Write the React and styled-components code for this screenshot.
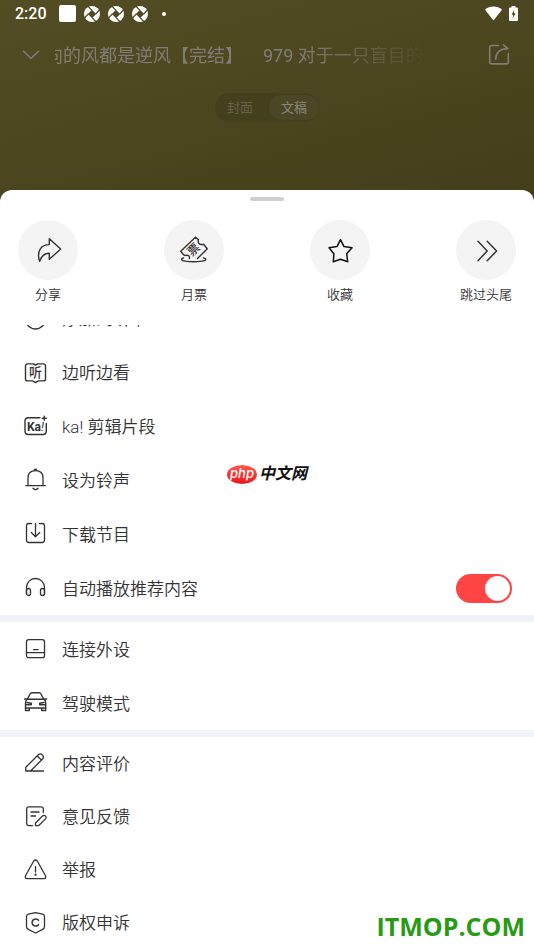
import React, { useState } from "react";
import styled, { createGlobalStyle } from "styled-components";

const GlobalStyle = createGlobalStyle`
  * {
    box-sizing: border-box;
  }
  body {
    margin: 0;
    font-family: Roboto, "Noto Sans CJK SC", sans-serif;
    color: #333333;
  }
  button {
    padding: 0;
    border: 0;
    background: none;
    font: inherit;
    color: inherit;
    cursor: pointer;
  }
`;

const Page = styled.div`
  position: relative;
  display: flex;
  flex-direction: column;
  height: 100vh;
  overflow: hidden;
  background: #433e1a linear-gradient(165deg, #524d23 0%, #4b461f 50%, #433e1a 100%)
    0 0 / 100% 210px no-repeat;
`;

const StatusBar = styled.div`
  display: flex;
  align-items: center;
  justify-content: space-between;
  height: 27px;
  padding: 0 16px 0 15px;
  color: #ffffff;
`;

const StatusGroup = styled.div`
  display: flex;
  align-items: center;
  gap: ${({ $gap }) => $gap}px;
`;

const Clock = styled.span`
  margin-right: 4px;
  font-size: 16px;
  font-weight: 500;
  line-height: 27px;
`;

const AppSquare = styled.span`
  width: 17px;
  height: 17px;
  border-radius: 2px;
  background: #ffffff;
`;

const Dot = styled.span`
  width: 4px;
  height: 4px;
  margin-left: 6px;
  border-radius: 50%;
  background: #ffffff;
`;

const NavBar = styled.header`
  display: flex;
  align-items: center;
  height: 56px;
  padding: 0 23px 0 22px;
  color: #7f7d76;
`;

const NavButton = styled.button`
  display: flex;
`;

const Marquee = styled.div`
  flex: 1;
  min-width: 0;
  margin: 0 56px 0 15px;
  padding-top: 2px;
  overflow: hidden;
  white-space: nowrap;
  -webkit-mask-image: linear-gradient(90deg, #000 66%, transparent 100%);
  mask-image: linear-gradient(90deg, #000 66%, transparent 100%);
`;

const MarqueeTrack = styled.div`
  display: flex;
  gap: 20px;
  margin-left: -10px;
  font-size: 18px;
  line-height: 26px;
`;

const Tabs = styled.div`
  display: flex;
  align-self: center;
  margin: 10px 0 68px;
  padding: 2px 0;
  border-radius: 15px;
  background: #443f1c;
`;

const Tab = styled.button`
  height: 25px;
  padding: ${({ $active }) => ($active ? "0 12px" : "0 16px 0 12px")};
  border-radius: 13px;
  background: ${({ $active }) => ($active ? "#4b4625" : "transparent")};
  color: ${({ $active }) => ($active ? "#8a8779" : "#66624a")};
  font-size: 13px;
  line-height: 25px;
`;

const Sheet = styled.section`
  display: flex;
  flex: 1;
  flex-direction: column;
  min-height: 0;
  padding-top: 7px;
  border-radius: 12px 12px 0 0;
  background: #ffffff;
`;

const Handle = styled.div`
  align-self: center;
  width: 34px;
  height: 4px;
  border-radius: 2px;
  background: #cfcfcf;
`;

const Actions = styled.div`
  display: flex;
  justify-content: space-between;
  padding: 19px 18px 21px;
`;

const Action = styled.button`
  display: flex;
  flex-direction: column;
  align-items: center;
  gap: 6px;
  width: 60px;
  font-size: 13px;
  font-weight: 350;
  line-height: 18px;
`;

const Circle = styled.span`
  display: flex;
  align-items: center;
  justify-content: center;
  width: 60px;
  height: 60px;
  border-radius: 50%;
  background: #f4f4f4;
`;

const MenuScroll = styled.div`
  flex: 1;
  min-height: 0;
  overflow: hidden;
`;

/* The list is scrolled part of the way past its first row */
const MenuContent = styled.div`
  margin-top: -34px;
`;

const Group = styled.div`
  display: grid;
  grid-auto-rows: ${({ $rowHeight }) => $rowHeight}px;

  & + & {
    border-top: 7px solid #f0f4f8;
  }
`;

const Row = styled.button`
  display: flex;
  align-items: center;
  gap: 14px;
  width: 100%;
  padding: 0 22px 0 24px;
  font-size: 17px;
  font-weight: 350;
  line-height: 24px;
  text-align: left;
`;

const RowLabel = styled.span`
  flex: 1;
  padding-top: 1px;
`;

const Switch = styled.input`
  appearance: none;
  width: 56px;
  height: 29px;
  margin: 0;
  padding: 2px;
  border-radius: 15px;
  background: ${({ checked }) => (checked ? "#ff4444" : "#d8d8d8")};
  cursor: pointer;

  &::before {
    content: "";
    display: block;
    width: 25px;
    height: 25px;
    margin-left: ${({ checked }) => (checked ? "27px" : "0")};
    border-radius: 50%;
    background: #ffffff;
  }
`;

const CenterMark = styled.div`
  position: absolute;
  top: 464px;
  left: 50%;
  display: flex;
  align-items: center;
  gap: 2px;
  transform: translateX(-50%);
  color: #111111;
  font-size: 16px;
  font-style: italic;
  font-weight: 700;
  line-height: 20px;
  white-space: nowrap;
  pointer-events: none;
`;

const PhpBadge = styled.span`
  width: 30px;
  height: 19px;
  border-radius: 50%;
  background: linear-gradient(#ff5a50, #e8161c);
  color: #ffffff;
  font-family: Inter, sans-serif;
  font-size: 13px;
  font-weight: 500;
  line-height: 17px;
  text-align: center;
`;

const SiteMark = styled.div`
  position: absolute;
  right: 9px;
  bottom: 9px;
  color: #2a9a16;
  font-family: "Open Sans", sans-serif;
  font-size: 25px;
  font-weight: 700;
  line-height: 30px;
  pointer-events: none;
`;

const Icon = ({ size = 24, width = 1.3, children }) => (
  <svg
    width={size}
    height={size}
    viewBox={`0 0 ${size} ${size}`}
    fill="none"
    stroke="currentColor"
    strokeWidth={width}
    strokeLinecap="round"
    strokeLinejoin="round"
    aria-hidden="true"
  >
    {children}
  </svg>
);

const Aperture = () => (
  <svg width="16" height="16" viewBox="0 0 17 17" aria-hidden="true">
    <circle cx="8.5" cy="8.5" r="8.5" fill="#fff" />
    <path fill="#4f4a22" d="M8.500 4 13 8.500 8.500 13 4 8.500Z" />
    <g stroke="#4f4a22" strokeWidth="1.3">
      <path d="M8.500 4.600 3.500 -.4" />
      <path d="M12.400 8.500 17.400 3.500" />
      <path d="M8.500 12.400 13.500 17.400" />
      <path d="M4.600 8.500 -.4 13.500" />
    </g>
  </svg>
);

const Wifi = () => (
  <svg width="17" height="15" viewBox="0 0 17 15" aria-hidden="true">
    <path fill="#fff" d="M8.500 14.500 0 3.800C2.400 1.800 5.300.6 8.500.6S14.600 1.800 17 3.800Z" />
  </svg>
);

const Battery = () => (
  <svg width="9" height="15" viewBox="0 0 9 15" aria-hidden="true">
    <path fill="#fff" d="M2.500 0h4v1.400H8q1 0 1 1V14q0 1-1 1H1q-1 0-1-1V2.400q0-1 1-1h1.500Z" />
    <path fill="#4a451e" d="M5.300 3.800 2.500 8.700h1.700l-.6 3.800 3-5.200H4.900Z" />
  </svg>
);

const ChevronDown = () => (
  <svg width="18" height="12" viewBox="0 0 18 12" fill="none" aria-hidden="true">
    <path d="M1 1.700 9 9.500l8-7.800" stroke="currentColor" strokeWidth="1.600" />
  </svg>
);

const ShareBox = () => (
  <Icon size={24} width={1.6}>
    <path d="M11.500 2.500H4.500Q2.700 2.500 2.700 4.300V19.100Q2.700 20.900 4.500 20.900H19.500Q21.300 20.900 21.300 19.100V10.500" />
    <path d="M8.700 16.400C8.700 10.100 12.500 5.600 20.800 5.600M16.500 1.800 21 5.600" />
  </Icon>
);

const actions = [
  {
    label: "分享",
    icon: (
      <Icon size={30} width={1.4}>
        <path d="M16.300 3.700 27.700 14 16.300 24.300V18.300C12 18.300 8.600 20.500 6.700 26.300C5.200 22.500 5.200 17.500 7.300 13.900C9.300 10.700 12.300 9.600 16.300 9.600Z" />
      </Icon>
    ),
  },
  {
    label: "月票",
    icon: (
      <Icon size={30} width={1.4}>
        <path d="M10.300 23.500C11 21 9.500 19.700 6.500 20.400Q5 20.600 4.200 19.300L1.700 16.300 16.500 2.200 19.500 4.600C18.300 7.600 20.500 10.300 24.500 9.300L28.300 13.700 18.500 23.500" />
        <path d="M4.500 22.800C1.500 24 2 25.500 6 26.100Q14.500 27.400 23 26.100C27.500 25.500 28 24 24.500 22.800" />
        <text
          transform="translate(14.500 14.500) rotate(-43)"
          y="4.200"
          fontSize="12"
          fontWeight="500"
          textAnchor="middle"
          fill="currentColor"
          stroke="none"
        >
          票
        </text>
      </Icon>
    ),
  },
  {
    label: "收藏",
    icon: (
      <Icon size={30} width={1.5}>
        <path
          stroke="#111"
          d="M15.500 4.600 19 11.600 27 12.800 21.700 18.700 22.700 26.800 15.500 24.200 8.300 26.800 8.900 18.700 4 12.800 12 11.600Z"
        />
      </Icon>
    ),
  },
  {
    label: "跳过头尾",
    icon: (
      <Icon size={30} width={1.5}>
        <path d="M7 6.300 16.200 16 7 25.700M16.200 6.300 25.600 16 16.200 25.700" />
      </Icon>
    ),
  },
];

const icons = {
  add: (
    <Icon>
      <circle cx="11.500" cy="13" r="10" />
      <path d="M11.500 8.500v9M7 13h9" />
    </Icon>
  ),
  book: (
    <Icon width={1.4}>
      <path d="M11.500 5.200 9.300 3.900H3.500Q1.500 3.900 1.500 5.900V18.900Q1.500 20.900 3.500 20.900H8.700L11.500 22.600 14.300 20.900H19.500Q21.500 20.900 21.500 18.900V5.900Q21.500 3.900 19.500 3.900H13.700Z" />
      <text x="11.500" y="17.300" fontSize="13" fontWeight="500" textAnchor="middle" fill="currentColor" stroke="none">
        听
      </text>
    </Icon>
  ),
  ka: (
    <Icon width={1.4}>
      <path d="M16 3.700H4.500Q1 3.700 1 7V17Q1 20.500 4.500 20.500H19Q22.300 20.500 22.300 17V9.500" />
      <path d="M20.300 2.300v4M18.300 4.300h4" />
      <text x="11.500" y="16.500" fontSize="12" fontWeight="700" textAnchor="middle" fill="currentColor" stroke="none">
        Ka<tspan fontStyle="italic" fontWeight="400">!</tspan>
      </text>
    </Icon>
  ),
  bell: (
    <Icon>
      <path d="M1.800 17.700H21.200M4 17.700V10Q4 2.600 11.500 2.600T19 10V17.700M10.300 1.300H12.700M9 20.300Q11.500 23 14 20.300" />
    </Icon>
  ),
  download: (
    <Icon>
      <path d="M7.500 1.700Q6.800 1.500 4.500 1.500Q2.500 1.500 2.500 4V18Q2.500 20.500 5 20.500H18Q20.500 20.500 20.500 18V4Q20.500 1.500 18.500 1.500Q16.200 1.500 15.500 1.700" />
      <path d="M11.500 1.500V14.500M7.300 10.500 11.500 14.700 15.700 10.500" />
    </Icon>
  ),
  headphones: (
    <Icon>
      <path d="M2.500 18V11.500A9 9 0 0 1 20.500 11.500V18" />
      <rect x="2.500" y="12.500" width="4" height="7" rx="2" />
      <rect x="16.500" y="12.500" width="4" height="7" rx="2" />
    </Icon>
  ),
  device: (
    <Icon>
      <rect x="2.500" y="2.700" width="18" height="18" rx="2.200" />
      <path d="M2.500 15.700H20.500M9.500 12.700H14" />
    </Icon>
  ),
  car: (
    <Icon width={1.4}>
      <path d="M3.300 8.200 6 3Q6.600 1.700 8 1.700H15Q16.400 1.700 17 3L19.700 8.200M.5 8H2.500M20.500 8H22.700M3.300 8.200H19.700Q21.700 9.500 21.700 12V19.500H17.700V17H5.300V19.500H1.500V12Q1.500 9.500 3.300 8.200M1.500 17H5.300M17.700 17H21.700" />
      <path d="M3 11.500 7.300 12.200V13.800H2.500M20 11.500 15.700 12.200V13.800H20.700" />
    </Icon>
  ),
  pencil: (
    <Icon>
      <path d="M1.800 19V15.300L14.300 2.700Q16.200 1 18.300 2.900T18.600 7L6.500 19H1.800M13.200 4 17.500 8M6.500 19H19.500" />
    </Icon>
  ),
  feedback: (
    <Icon>
      <path d="M8.500 20.700H5Q2.700 20.700 2.700 18.500V4Q2.700 1.900 5 1.900H17Q19.300 1.900 19.300 4V7.500M7 7H15M7 11H11.500" />
      <path d="M11.500 20.700V18L18.800 10.800Q20.200 9.800 21.500 11T21.700 13.600L14.500 20.700Z" />
    </Icon>
  ),
  warning: (
    <Icon>
      <path d="M9.700 3Q11.500 1 13.300 3L21.500 17.700Q22.300 20.500 20 20.700H3Q.7 20.500 1.500 17.700ZM11.500 8.300V14" />
      <circle cx="11.500" cy="16.700" r=".5" fill="currentColor" />
    </Icon>
  ),
  shield: (
    <Icon>
      <path d="M2.500 5.500Q2.500 3.600 4.500 3.200L11.500 1.700 18.500 3.200Q20.500 3.600 20.500 5.500V15.500Q20.500 17.500 18.700 18.300L11.500 22 4.300 18.300Q2.500 17.500 2.500 15.500Z" />
      <path d="M14.500 9.300A3.600 3.600 0 1 0 14.500 13.700" strokeWidth="1.500" />
    </Icon>
  ),
};

const groups = [
  {
    rowHeight: 54,
    rows: [
      { icon: "add", label: "添加到听单" },
      { icon: "book", label: "边听边看" },
      { icon: "ka", label: "ka! 剪辑片段" },
      { icon: "bell", label: "设为铃声" },
      { icon: "download", label: "下载节目" },
      { icon: "headphones", label: "自动播放推荐内容", toggle: true },
    ],
  },
  {
    rowHeight: 54,
    rows: [
      { icon: "device", label: "连接外设" },
      { icon: "car", label: "驾驶模式" },
    ],
  },
  {
    rowHeight: 53,
    rows: [
      { icon: "pencil", label: "内容评价" },
      { icon: "feedback", label: "意见反馈" },
      { icon: "warning", label: "举报" },
      { icon: "shield", label: "版权申诉" },
    ],
  },
];

const MenuRow = ({ icon, label, toggle }) => {
  const [on, setOn] = useState(true);

  if (toggle) {
    return (
      <Row as="label">
        {icons[icon]}
        <RowLabel>{label}</RowLabel>
        <Switch type="checkbox" checked={on} onChange={() => setOn(!on)} />
      </Row>
    );
  }

  return (
    <Row type="button">
      {icons[icon]}
      <RowLabel>{label}</RowLabel>
    </Row>
  );
};

const App = () => {
  const [tab, setTab] = useState("文稿");

  return (
    <>
      <GlobalStyle />
      <Page>
        <StatusBar>
          <StatusGroup $gap={8}>
            <Clock>2:20</Clock>
            <AppSquare />
            <Aperture />
            <Aperture />
            <Aperture />
            <Dot />
          </StatusGroup>
          <StatusGroup $gap={7}>
            <Wifi />
            <Battery />
          </StatusGroup>
        </StatusBar>

        <NavBar>
          <NavButton type="button" aria-label="收起">
            <ChevronDown />
          </NavButton>
          <Marquee>
            <MarqueeTrack>
              <span>向的风都是逆风【完结】</span>
              <span>979 对于一只盲目的风</span>
            </MarqueeTrack>
          </Marquee>
          <NavButton type="button" aria-label="分享">
            <ShareBox />
          </NavButton>
        </NavBar>

        <Tabs>
          {["封面", "文稿"].map((name) => (
            <Tab key={name} type="button" $active={tab === name} onClick={() => setTab(name)}>
              {name}
            </Tab>
          ))}
        </Tabs>

        <Sheet>
          <Handle />
          <Actions>
            {actions.map(({ label, icon }) => (
              <Action key={label} type="button">
                <Circle>{icon}</Circle>
                <span>{label}</span>
              </Action>
            ))}
          </Actions>
          <MenuScroll>
            <MenuContent>
              {groups.map(({ rowHeight, rows }) => (
                <Group key={rows[0].label} $rowHeight={rowHeight}>
                  {rows.map((row) => (
                    <MenuRow key={row.label} {...row} />
                  ))}
                </Group>
              ))}
            </MenuContent>
          </MenuScroll>
        </Sheet>

        <CenterMark>
          <PhpBadge>php</PhpBadge>
          <span>中文网</span>
        </CenterMark>
        <SiteMark>ITMOP.COM</SiteMark>
      </Page>
    </>
  );
};

export default App;
